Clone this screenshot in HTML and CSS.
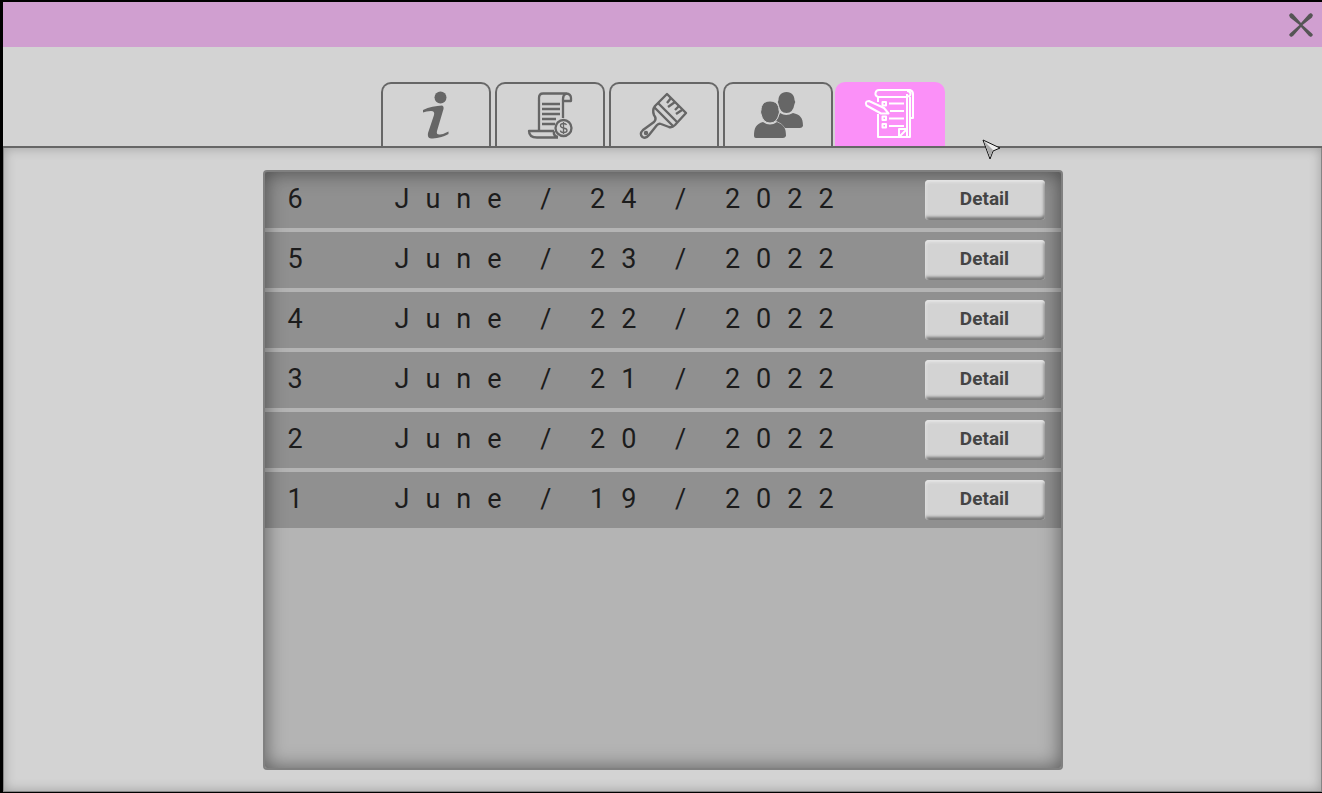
FILE: index.html
```html
<!DOCTYPE html>
<html lang="en">
<head>
  <meta charset="UTF-8">
  <meta name="viewport" content="width=device-width, initial-scale=1.0">
  <link rel="stylesheet" href="styles.css">
  <title>Reports</title>
</head>
<body>
  <div class="window">
    <header class="titlebar">
      <button class="close" aria-label="Close">
        <svg width="24" height="24" viewBox="0 0 24 24">
          <path d="M0 2 L2 0 L4 1 L12 10 L20 1 L22 0 L24 2 L23 4.500 L13.500 12 L23 20.500 L24 22 L22 24 L20 23 L12 14 L4 23 L2 24 L0 22 L1 20.500 L10.500 12 L1 4.500Z" fill="#555"/>
        </svg>
      </button>
    </header>

    <nav class="tabs">
      <button class="tab" aria-label="Info">
        <svg width="110" height="62" viewBox="-1 0 110 62">
          <circle cx="58.500" cy="13.500" r="6" fill="#666"/>
          <path d="M41 26 C47 23 54 22 60 21.500 Q62 22 61.500 25 L55 47 Q54 51 58 50.500 Q62 50 66.500 47.500 L66.500 50 C60 53.500 54 54.500 49 54.500 Q45 54 46 49 L52 31 Q53 27 49 27 Q44 27 41 28.500Z" fill="#666"/>
        </svg>
      </button>
      <button class="tab" aria-label="Finance">
        <svg width="110" height="62" viewBox="-1 0 110 62" fill="none" stroke="#666" stroke-width="2.300" stroke-linejoin="round">
          <path d="M43 46 V14 Q43 9.500 47 9.500 H70 Q67 11 67 15 V34 M70 9.500 Q75 10 75 14 V17 H67"/>
          <path d="M46 20 H64 M46 25 H64 M46 30 H64 M46 35 H60 M46 40 H59"/>
          <path d="M58 47 H33 Q33 53.500 41 53.500 H62 M58 47 Q57 52 62 53"/>
          <circle cx="67.500" cy="44" r="8"/>
          <path d="M70.500 41 Q70 39.500 67.500 39.500 Q64.500 39.500 64.500 41.500 Q64.500 43.500 67.500 44 Q71 44.500 71 46.500 Q71 48.500 67.500 48.500 Q64.500 48.500 64.500 46.500 M67.500 38 V50" stroke-width="1.300"/>
        </svg>
      </button>
      <button class="tab" aria-label="Style">
        <svg width="110" height="62" viewBox="-1 0 110 62" fill="none" stroke="#666" stroke-width="2.400" stroke-linejoin="round">
          <path d="M57 10 L76 29 L65 41 Q62 44 59 43 L51 40 Q49 39 47 41 L39 51 Q36 55 32.500 53 Q29 50 33 46 L44 38 Q47 35 44 31 Q42 26 45 22Z"/>
          <path d="M48 19 L67 38 M44 23 L63 42"/>
          <path d="M61 14 L57 19 M65 18 L58 23 M69 22 L65 26 M72 26 L66 30"/>
          <circle cx="36" cy="49" r="1"/>
        </svg>
      </button>
      <button class="tab" aria-label="People">
        <svg width="110" height="62" viewBox="-2 0 110 62" fill="#666">
          <path d="M61.500 8 C67 8 69.500 12 69.500 16 Q71 18 69.500 20 Q68 29 61.500 29 Q55 29 53.500 20 Q52 18 53.500 16 C53.500 12 56 8 61.500 8Z"/>
          <path d="M55 29 Q61 33 68 29 C75 31 78 33 78 42 Q77 44 75 44 H60 Q57 39 51 37Z"/>
          <path d="M45 17 C51 17 54 21 54 26 Q55 28 54 30 Q52 39 45 39 Q38 39 36 30 Q35 28 36 26 C36 21 39 17 45 17Z" stroke="#d3d3d3" stroke-width="1"/>
          <path d="M38 38 Q45 43 52 38 C59 41 61 44 61 52 Q60 54 58 54 H31 Q29 54 29 52 C29 44 31 40 38 38Z"/>
        </svg>
      </button>
      <button class="tab active" aria-label="Reports">
        <svg width="110" height="64" viewBox="0 0 110 64" fill="none" stroke="#fff" stroke-width="2" stroke-linejoin="round">
          <path d="M43 20 V15 Q40 14 40.500 11 Q41 8 44 8 H75 Q78 9 78 12 V36 H75 M43 32 V55 H75 V15 M43 15 H72"/>
          <path d="M72 55 V12 M72 14 Q75.500 15 75.500 11.500 Q75 9 72 9"/>
          <path d="M54 21.500 H69 M55 29 H69 M54 36.500 H69 M54 44 H69"/>
          <path d="M47.500 20 h3.500 v3.500 h-3.500Z M47.500 34.500 h3.500 v3.500 h-3.500Z M47.500 42 h3.500 v3.500 h-3.500Z"/>
          <path d="M34 19 L49 26 L53.500 31.500 L46 31.500 L31.500 23.500 Q29.500 19 34 19Z" fill="#fb90f8"/>
          <path d="M64 55 V47 H72 M65 54 L72 47"/>
        </svg>
      </button>
    </nav>

    <main class="content">
      <ul class="reports">
        <li class="report">
          <span class="number">6</span>
          <span class="date">June / 24 / 2022</span>
          <button class="detail">Detail</button>
        </li>
        <li class="report">
          <span class="number">5</span>
          <span class="date">June / 23 / 2022</span>
          <button class="detail">Detail</button>
        </li>
        <li class="report">
          <span class="number">4</span>
          <span class="date">June / 22 / 2022</span>
          <button class="detail">Detail</button>
        </li>
        <li class="report">
          <span class="number">3</span>
          <span class="date">June / 21 / 2022</span>
          <button class="detail">Detail</button>
        </li>
        <li class="report">
          <span class="number">2</span>
          <span class="date">June / 20 / 2022</span>
          <button class="detail">Detail</button>
        </li>
        <li class="report">
          <span class="number">1</span>
          <span class="date">June / 19 / 2022</span>
          <button class="detail">Detail</button>
        </li>
      </ul>
    </main>
  </div>

  <svg class="cursor" width="20" height="22" viewBox="0 0 20 22">
    <path d="M1 1 L18 9 L11 12 L8 20Z" fill="#eee" stroke="#111" stroke-width="1"/>
    <path d="M2 2 L11 11 L8 18Z" fill="#aaa"/>
  </svg>
</body>
</html>
```
FILE: styles.css
```css
* {
  box-sizing: border-box;
}

body {
  margin: 0;
  background-color: #000;
  font-family: Roboto, sans-serif;
}

button {
  font-family: inherit;
  cursor: pointer;
}

.window {
  display: flex;
  flex-direction: column;
  min-height: 100vh;
  border: solid #000;
  border-width: 2px 0 1px 3px;
  background-color: #d3d3d3;
}

.titlebar {
  display: flex;
  justify-content: flex-end;
  align-items: center;
  height: 45px;
  padding-right: 9px;
  background-color: #d09fd0;
}

.close {
  display: flex;
  padding: 0;
  border: none;
  background: none;
}

.tabs {
  display: flex;
  justify-content: center;
  gap: 4px;
  padding-top: 35px;
  border-bottom: 2px solid #666;
}

.tab {
  display: flex;
  justify-content: center;
  width: 110px;
  height: 64px;
  padding: 0;
  border: 2px solid #666;
  border-bottom: none;
  border-radius: 10px 10px 0 0;
  background: none;
}

.tab svg {
  flex: none;
}

.active {
  margin-left: -2px;
  border: none;
  background-color: #fb90f8;
}

.content {
  flex: 1;
  display: flex;
  justify-content: center;
  padding: 22px 20px 21px;
  border: 1px solid #858585;
  border-top: none;
  box-shadow: inset 0 0 12px rgba(0, 0, 0, 0.25);
}

.reports {
  display: flex;
  flex-direction: column;
  gap: 4px;
  width: 800px;
  margin: 0;
  padding: 0;
  list-style: none;
  border: 2px solid #808080;
  border-radius: 4px;
  background-color: #b4b4b4;
  box-shadow: inset 0 0 20px rgba(0, 0, 0, 0.5);
}

/* see-through, so the inner shadow of the list shows in the rows */
.report {
  display: grid;
  grid-template-columns: 107px 1fr 120px;
  align-items: center;
  height: 56px;
  padding: 0 16px 0 23px;
  background-color: rgba(0, 0, 0, 0.2);
  color: #1c1c1c;
  font-size: 27px;
  line-height: 40px;
}

.number,
.date {
  padding-bottom: 2px;
}

.date {
  letter-spacing: 16px;
  white-space: nowrap;
}

.detail {
  height: 40px;
  padding: 0 0 4px;
  border: none;
  border-radius: 4px;
  background-color: #d3d3d3;
  box-shadow: inset 1px 2px 3px #e6e6e6, inset -1px -3px 3px #777;
  color: #444;
  font-size: 19px;
  font-weight: bold;
}

.cursor {
  position: absolute;
  left: 982px;
  top: 139px;
  pointer-events: none;
}
```
